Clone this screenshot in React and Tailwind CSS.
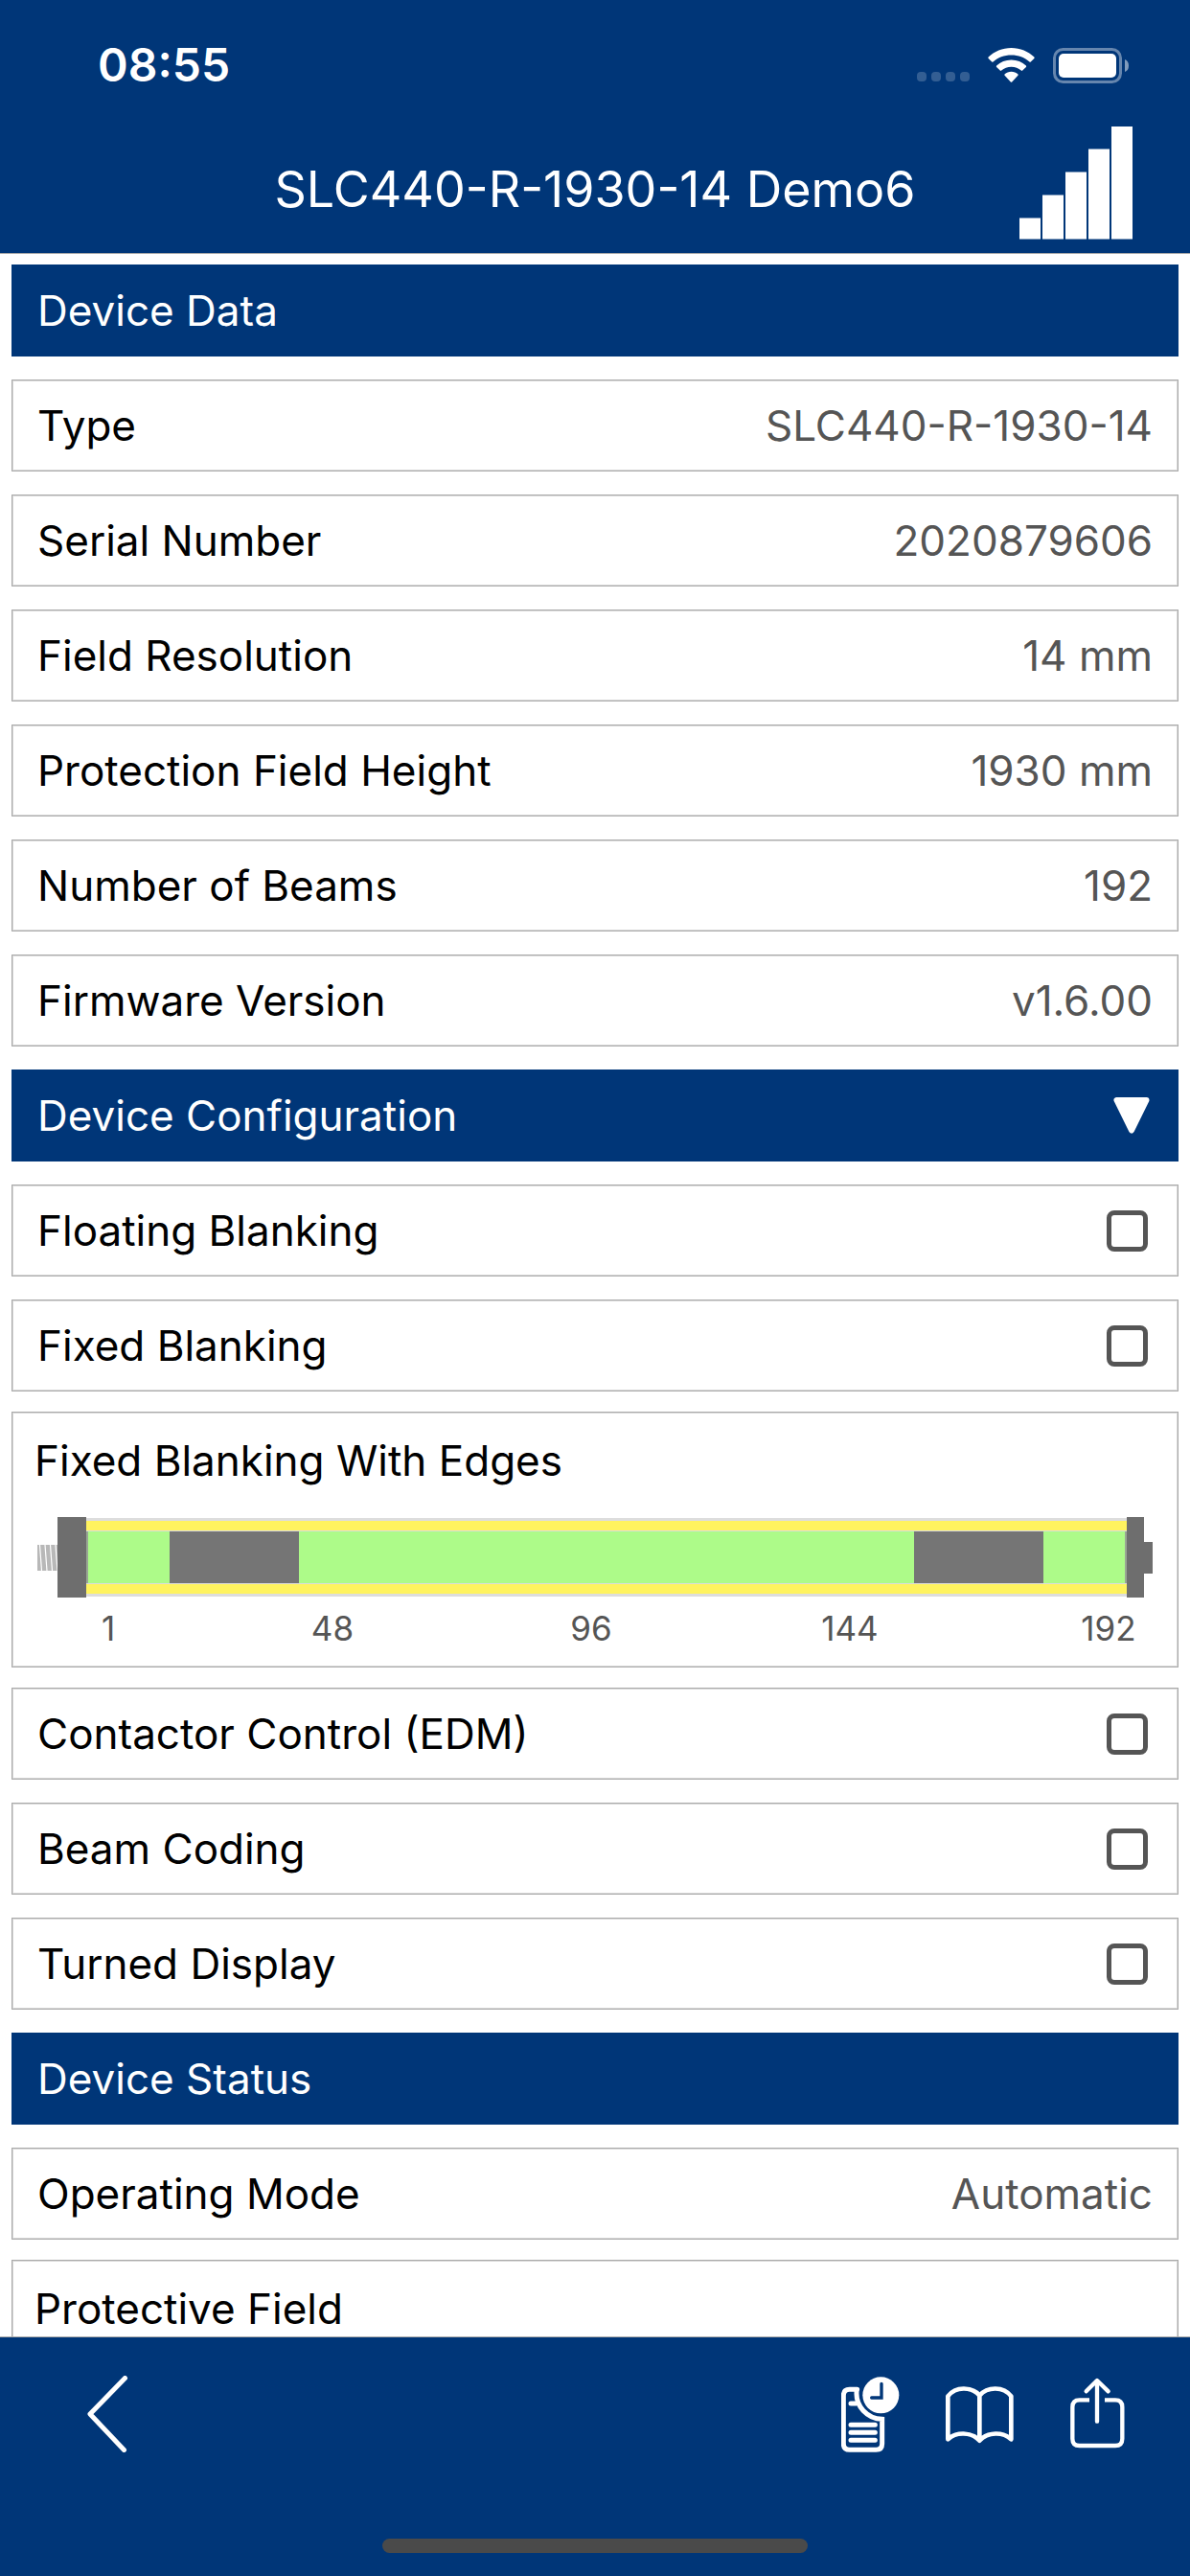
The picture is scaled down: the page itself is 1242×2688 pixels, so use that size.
import React, { useState } from 'react';

const DEVICE_DATA = [
    { label: 'Type', value: 'SLC440-R-1930-14' },
    { label: 'Serial Number', value: '2020879606' },
    { label: 'Field Resolution', value: '14 mm' },
    { label: 'Protection Field Height', value: '1930 mm' },
    { label: 'Number of Beams', value: '192' },
    { label: 'Firmware Version', value: 'v1.6.00' },
];

// beams per segment, 192 in total
const BEAM_SEGMENTS = [
    { beams: 15, blanked: false },
    { beams: 24, blanked: true },
    { beams: 114, blanked: false },
    { beams: 24, blanked: true },
    { beams: 15, blanked: false },
];

function StatusBar() {
    return (
        <div className="flex h-[132px] items-center justify-between pl-[102px] pr-16 pt-1">
            <span className="text-[48px] font-semibold">08:55</span>
            <div className="flex items-center">
                <div className="mt-6 flex gap-[5px]">
                    <span className="size-2.5 rounded-[4px] bg-white/20" />
                    <span className="size-2.5 rounded-[4px] bg-white/20" />
                    <span className="size-2.5 rounded-[4px] bg-white/20" />
                    <span className="size-2.5 rounded-[4px] bg-white/20" />
                </div>
                <svg className="ml-[19px] h-9 w-[49px]" viewBox="0 0 49 36" fill="white" aria-hidden="true">
                    <path d="M24.5 0C33.8 0 42.2 3.6 48.4 9.5Q49 10.2 48.4 10.9L44.8 14.5Q44.2 15 43.5 14.5C38.5 9.9 31.9 7.5 24.5 7.5S10.5 9.9 5.500 14.5Q4.8 15 4.2 14.5L.6 10.9Q0 10.2 .6 9.5C6.8 3.6 15.2 0 24.5 0Z" />
                    <path d="M24.5 12.5C30.5 12.5 35.8 14.7 39.9 18.5Q40.5 19.2 39.9 19.9L36.2 23.6Q35.5 24.2 34.8 23.6C32 21.1 28.5 19.8 24.5 19.8S17 21.1 14.2 23.6Q13.5 24.2 12.8 23.6L9.1 19.9Q8.5 19.2 9.1 18.5C13.2 14.7 18.5 12.5 24.5 12.5Z" />
                    <path d="M24.5 24.8C27.2 24.8 29.5 25.7 31.3 27.3Q32 28 31.4 28.7L25.2 35.4Q24.5 36 23.8 35.4L17.6 28.7Q17 28 17.7 27.3C19.5 25.7 21.8 24.8 24.5 24.8Z" />
                </svg>
                <svg className="ml-[19px] h-[37px] w-[79px]" viewBox="0 0 79 37" aria-hidden="true">
                    <rect x="1.5" y="1.5" width="69" height="34" rx="9" fill="none" stroke="white" strokeOpacity=".4" strokeWidth="3" />
                    <rect x="6" y="6" width="60" height="25" rx="5" fill="white" />
                    <path d="M75 12Q79 13.5 79 18.5T75 25Z" fill="white" fillOpacity=".5" />
                </svg>
            </div>
        </div>
    );
}

function Header() {
    return (
        <header className="shrink-0 border-b border-[#aaaaaa] bg-[#003678] text-white">
            <StatusBar />
            <div className="grid h-[132px] grid-cols-[1fr_auto_1fr]">
                <span />
                <h1 className="text-[52px] leading-[132px]">SLC440-R-1930-14 Demo6</h1>
                <svg className="mr-[60px] size-[118px] justify-self-end" viewBox="0 0 118 118" fill="white" aria-hidden="true">
                    <rect x="0" y="95.5" width="22" height="22" />
                    <rect x="24" y="71.5" width="22" height="46" />
                    <rect x="48" y="47.5" width="22" height="70" />
                    <rect x="72" y="23.5" width="22" height="94" />
                    <rect x="96" y="0" width="22" height="117.5" />
                </svg>
            </div>
        </header>
    );
}

function SectionHeader({ title }) {
    return (
        <h2 className="h-24 bg-[#003678] px-[27px] leading-24 text-white">{title}</h2>
    );
}

function ValueRow({ label, value }) {
    return (
        <div className="flex h-24 items-center justify-between border border-[#aaaaaa] px-[26px] shadow-[inset_0_0_0_1px_#d8d8d8]">
            <dt>{label}</dt>
            <dd className="text-[#555555]">{value}</dd>
        </div>
    );
}

function CheckRow({ label }) {
    return (
        <label className="flex h-24 items-center justify-between border border-[#aaaaaa] pl-[26px] pr-[31px] shadow-[inset_0_0_0_1px_#d8d8d8]">
            {label}
            <input
                type="checkbox"
                className="size-[43px] appearance-none rounded-[8px] border-[5px] border-[#555555] checked:bg-[#555555]"
            />
        </label>
    );
}

function Panel({ title, children }) {
    return (
        <section className="-my-[3px] border border-[#aaaaaa] pb-4 pl-[23px] pr-[26px] pt-0.5 shadow-[inset_0_0_0_1px_#d8d8d8]">
            <h3 className="leading-24">{title}</h3>
            {children}
        </section>
    );
}

function BeamDiagram() {
    return (
        <div className="ml-[3px] mt-[11px]">
            <div className="flex h-[84px] items-center">
                <svg className="h-[27px] w-[21px]" viewBox="0 0 21 27" aria-hidden="true">
                    <rect width="21" height="27" fill="#b8b8b8" />
                    <path d="M2.5 0L4.5 27M8 0L10 27M13.5 0L15.5 27M19 0L21 27" stroke="white" strokeWidth="1.2" />
                </svg>
                <div className="h-full w-[30px] bg-[#6e6e6e]" />
                <div className="flex-1">
                    <div className="h-[14px] border-b border-t-[3px] border-b-[#dcdcdc] border-t-[#dddddd] bg-[#fff35f]" />
                    <div className="flex h-[54px] border-x-2 border-[#9aa694]">
                        {BEAM_SEGMENTS.map((segment, index) => (
                            <div
                                key={index}
                                className={segment.blanked ? 'bg-[#757575]' : 'bg-[#adfb89]'}
                                style={{ flexGrow: segment.beams }}
                            />
                        ))}
                    </div>
                    <div className="h-[14px] border-b-[3px] border-t border-b-[#dddddd] border-t-[#dcdcdc] bg-[#fff35f]" />
                </div>
                <div className="h-full w-[18px] bg-[#6e6e6e]" />
                <div className="h-[33px] w-[9px] bg-[#6e6e6e]" />
            </div>
            <div className="mt-2 flex pl-[34px] pr-[11px] text-center text-[35px] leading-12 text-[#555555]">
                <span className="w-20">1</span>
                <div className="ml-[159px] flex flex-1 justify-between">
                    <span className="w-[70px]">48</span>
                    <span className="w-[70px]">96</span>
                    <span className="w-[70px]">144</span>
                    <span className="w-[70px]">192</span>
                </div>
            </div>
        </div>
    );
}

function Footer() {
    return (
        <footer className="flex h-[250px] shrink-0 flex-col justify-between border-t border-[#aaaaaa] bg-[#003678] pb-6 pt-10">
            <nav className="flex h-20 items-center pl-[91px] pr-[68px]">
                <button type="button" aria-label="Back">
                    <svg className="h-20 w-[43px]" viewBox="0 0 43 80" fill="none" stroke="white" strokeWidth="5" strokeLinecap="round" strokeLinejoin="round">
                        <path d="M39.5 2.5L3 40L38.5 77.5" />
                    </svg>
                </button>
                <button type="button" className="ml-auto" aria-label="History">
                    <svg className="h-20 w-[61px]" viewBox="114 177 183 240" fill="none" stroke="white" strokeLinecap="round">
                        <path d="M164 220H140Q121 220 121 239V390Q121 409 140 409H223Q242 409 242 390V313C198 312 155 274 163 220" strokeWidth="15" strokeLinejoin="miter" />
                        <path d="M144 264H160M144 331H220M144 355H220M144 379H220" strokeWidth="15" />
                        <circle cx="238" cy="238" r="57" fill="white" stroke="none" />
                        <path d="M240 202V246H209" stroke="#003678" strokeWidth="10" />
                    </svg>
                </button>
                <button type="button" className="ml-12" aria-label="Manual">
                    <svg className="h-20 w-[71px]" viewBox="441 177 213 240" fill="none" stroke="white" strokeWidth="14" strokeLinecap="round" strokeLinejoin="round">
                        <path d="M547 239C522 210 472 210 448 241V376C473 352 521 352 547 380C573 352 621 352 646 376V241C622 210 572 210 547 239ZM547 239V376" />
                    </svg>
                </button>
                <button type="button" className="ml-[59px]" aria-label="Share">
                    <svg className="h-20 w-[57px]" viewBox="831 177 171 240" fill="none" stroke="white" strokeWidth="13" strokeLinejoin="round">
                        <path d="M891 253H860Q838 253 838 275V374Q838 396 860 396H972Q994 396 994 374V275Q994 253 972 253H939" />
                        <path d="M915 320V194M881 226L915 192L950 226" strokeLinecap="round" />
                    </svg>
                </button>
            </nav>
            <div className="h-[15px] w-[444px] self-center rounded-full bg-[#4a4a4a]" />
        </footer>
    );
}

function App() {
    const [configOpen, setConfigOpen] = useState(true);

    return (
        <div className="flex h-screen flex-col bg-white font-['Inter','Liberation_Sans',sans-serif] text-[44px] text-black">
            <Header />
            <main className="flex min-h-0 flex-1 flex-col overflow-y-auto px-3 [scrollbar-width:none]">
                <div className="flex flex-col gap-6 pt-[11px]">
                    <SectionHeader title="Device Data" />
                    <dl className="flex flex-col gap-6">
                        {DEVICE_DATA.map((row) => (
                            <ValueRow key={row.label} label={row.label} value={row.value} />
                        ))}
                    </dl>

                    <h2>
                        <button
                            type="button"
                            className="flex h-24 w-full items-center justify-between bg-[#003678] pl-[27px] pr-[30px] text-white"
                            aria-expanded={configOpen}
                            onClick={() => setConfigOpen(!configOpen)}
                        >
                            Device Configuration
                            <svg className="size-[38px]" viewBox="0 0 38 38" fill="white" stroke="white" strokeWidth="6" strokeLinejoin="round" aria-hidden="true">
                                <path d="M3.5 3H34.5L19 34.5Z" />
                            </svg>
                        </button>
                    </h2>
                    {configOpen && (
                        <>
                            <CheckRow label="Floating Blanking" />
                            <CheckRow label="Fixed Blanking" />
                            <Panel title="Fixed Blanking With Edges">
                                <BeamDiagram />
                            </Panel>
                            <CheckRow label="Contactor Control (EDM)" />
                            <CheckRow label="Beam Coding" />
                            <CheckRow label="Turned Display" />
                        </>
                    )}

                    <SectionHeader title="Device Status" />
                    <dl>
                        <ValueRow label="Operating Mode" value="Automatic" />
                    </dl>
                    <Panel title="Protective Field" />
                </div>
            </main>
            <Footer />
        </div>
    );
}

export default App;
